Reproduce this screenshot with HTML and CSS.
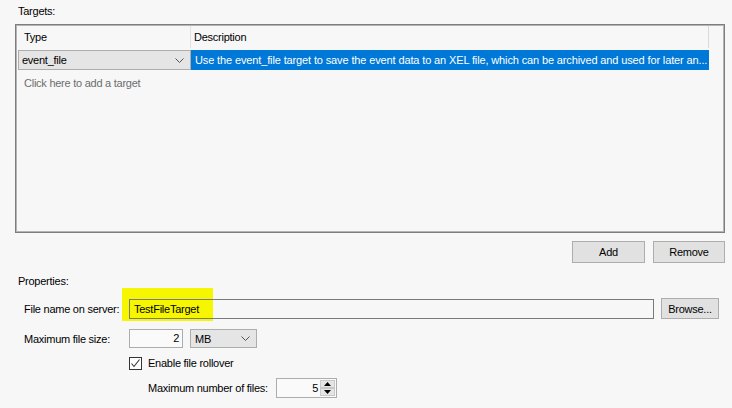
FILE: index.html
```html
<!DOCTYPE html>
<html>
<head>
<meta charset="utf-8">
<link rel="stylesheet" href="styles.css">
</head>
<body>
<div class="page">
  <div class="section-label">Targets:</div>
  <div class="grid">
    <div class="grid-head">
      <div class="hcell hcell-type">Type</div>
      <div class="hcell hcell-desc">Description</div>
    </div>
    <div class="grid-row">
      <div class="combo combo-type">
        <span>event_file</span>
        <svg class="chev" width="9" height="5" viewBox="0 0 9 5"><polyline points="0.5,0.5 4.5,4.5 8.5,0.5" fill="none" stroke="#555" stroke-width="1"/></svg>
      </div>
      <div class="desc-cell">Use the event_file target to save the event data to an XEL file, which can be archived and used for later an...</div>
    </div>
    <div class="add-hint">Click here to add a target</div>
  </div>
  <div class="button-row">
    <button class="btn btn-add">Add</button>
    <button class="btn btn-remove">Remove</button>
  </div>
  <div class="section-label props-label">Properties:</div>
  <div class="form-row file-row">
    <span class="highlight"></span>
    <label class="field-label">File name on server:</label>
    <div class="textbox textbox-file">TestFileTarget</div>
    <button class="btn btn-browse">Browse...</button>
  </div>
  <div class="form-row size-row">
    <label class="field-label">Maximum file size:</label>
    <div class="textbox textbox-size">2</div>
    <div class="combo combo-unit">
      <span>MB</span>
      <svg class="chev" width="9" height="5" viewBox="0 0 9 5"><polyline points="0.5,0.5 4.5,4.5 8.5,0.5" fill="none" stroke="#555" stroke-width="1"/></svg>
    </div>
  </div>
  <div class="form-row check-row">
    <span class="checkbox">
      <svg width="11" height="11" viewBox="0 0 11 11"><polyline points="1.5,5.5 4,8.5 9.5,1.5" fill="none" stroke="#333" stroke-width="1.1"/></svg>
    </span>
    <span class="check-label">Enable file rollover</span>
  </div>
  <div class="form-row spin-row">
    <label class="field-label spin-label">Maximum number of files:</label>
    <div class="spinner">
      <span class="spin-value">5</span>
      <span class="spin-buttons">
        <span class="spin-btn"><svg width="7" height="4" viewBox="0 0 7 4"><polygon points="0,4 3.5,0 7,4" fill="#000"/></svg></span>
        <span class="spin-btn"><svg width="7" height="4" viewBox="0 0 7 4"><polygon points="0,0 3.5,4 7,0" fill="#000"/></svg></span>
      </span>
    </div>
  </div>
</div>
</body>
</html>
```

FILE: styles.css
```css
html, body {
  margin: 0;
  padding: 0;
}
body {
  background: #f7f7f7;
  font-family: "Liberation Sans", Arial, sans-serif;
  font-size: 11px;
  letter-spacing: -0.25px;
  color: #000;
  width: 732px;
  height: 408px;
  overflow: hidden;
  white-space: nowrap;
}
.page {
  display: flex;
  flex-direction: column;
}
.section-label {
  padding: 4px 0 0 18px;
  line-height: 15px;
  height: 24px;
  box-sizing: border-box;
}
.grid {
  margin-left: 15px;
  width: 710px;
  height: 209px;
  box-sizing: border-box;
  border: 1px solid #7e7e7e;
  box-shadow: inset 0 0 0 1px #b4b4b4;
  padding: 1px;
  background: #f7f7f7;
}
.grid-head {
  display: flex;
  height: 22px;
}
.hcell {
  line-height: 22px;
  box-sizing: border-box;
}
.hcell-type {
  width: 174px;
  padding-left: 7px;
  border-right: 1px solid #e3e3e3;
}
.hcell-desc {
  width: 518px;
  padding-left: 3px;
  border-right: 1px solid #d9d9d9;
}
.grid-row {
  display: flex;
  margin-top: 2px;
  height: 20px;
}
.combo {
  display: flex;
  align-items: center;
  justify-content: space-between;
  box-sizing: border-box;
  background: #e5e5e5;
  border: 1px solid #adadad;
}
.combo-type {
  margin-left: 1px;
  width: 173px;
  height: 20px;
  padding: 0 6px 0 3px;
}
.chev {
  display: block;
}
.desc-cell {
  width: 518px;
  height: 20px;
  line-height: 20px;
  background: #0078d7;
  color: #fff;
  padding-left: 4px;
  box-sizing: border-box;
  overflow: hidden;
  letter-spacing: -0.13px;
}
.add-hint {
  margin-top: 6px;
  padding-left: 7px;
  line-height: 14px;
  color: #6d6d6d;
}
.button-row {
  display: flex;
  justify-content: flex-end;
  gap: 8px;
  margin-top: 8px;
  padding-right: 7px;
}
.btn {
  font: inherit;
  letter-spacing: inherit;
  color: #000;
  background: #e1e1e1;
  border: 1px solid #adadad;
  border-radius: 0;
  height: 22px;
  padding: 0;
  box-sizing: border-box;
}
.btn-add { width: 73px; }
.btn-remove { width: 72px; }
.props-label {
  margin-top: 7px;
}
.form-row {
  display: flex;
  align-items: center;
  position: relative;
}
.file-row {
  margin-top: 4px;
  padding-left: 24px;
}
.highlight {
  position: absolute;
  left: 122px;
  top: -10px;
  width: 91px;
  height: 33px;
  background: #f6f600;
}
.field-label {
  width: 105px;
  position: relative;
}
.textbox {
  box-sizing: border-box;
  border: 1px solid #adadad;
  height: 20px;
  line-height: 18px;
  position: relative;
}
.textbox-file {
  width: 525px;
  border-color: #7a7a7a;
  padding-left: 4px;
}
.btn-browse {
  margin-left: 7px;
  width: 58px;
  height: 21px;
}
.size-row {
  margin-top: 10px;
  padding-left: 24px;
}
.textbox-size {
  width: 54px;
  height: 19px;
  line-height: 17px;
  text-align: right;
  padding-right: 3px;
  background: #fafafa;
}
.combo-unit {
  margin-left: 7px;
  width: 67px;
  height: 19px;
  padding: 0 6px 0 4px;
}
.check-row {
  margin-top: 8px;
  padding-left: 129px;
}
.checkbox {
  width: 13px;
  height: 13px;
  box-sizing: border-box;
  border: 1px solid #333;
  background: #fff;
  display: flex;
  align-items: center;
  justify-content: center;
}
.checkbox svg { display: block; }
.check-label {
  margin-left: 6px;
  line-height: 14px;
}
.spin-row {
  margin-top: 8px;
  padding-left: 148px;
}
.spin-label {
  width: 128px;
}
.spinner {
  display: flex;
  justify-content: flex-end;
  align-items: stretch;
  box-sizing: border-box;
  width: 61px;
  height: 20px;
  border: 1px solid #adadad;
  background: #fafafa;
  padding: 1px 1px 1px 0;
}
.spin-value {
  line-height: 16px;
  padding-right: 2px;
}
.spin-buttons {
  display: flex;
  flex-direction: column;
  width: 15px;
}
.spin-btn {
  flex: 1;
  display: flex;
  align-items: center;
  justify-content: center;
  background: #e5e5e5;
  border: 1px solid #c8c8c8;
  box-sizing: border-box;
}
.spin-btn svg { display: block; }
```
